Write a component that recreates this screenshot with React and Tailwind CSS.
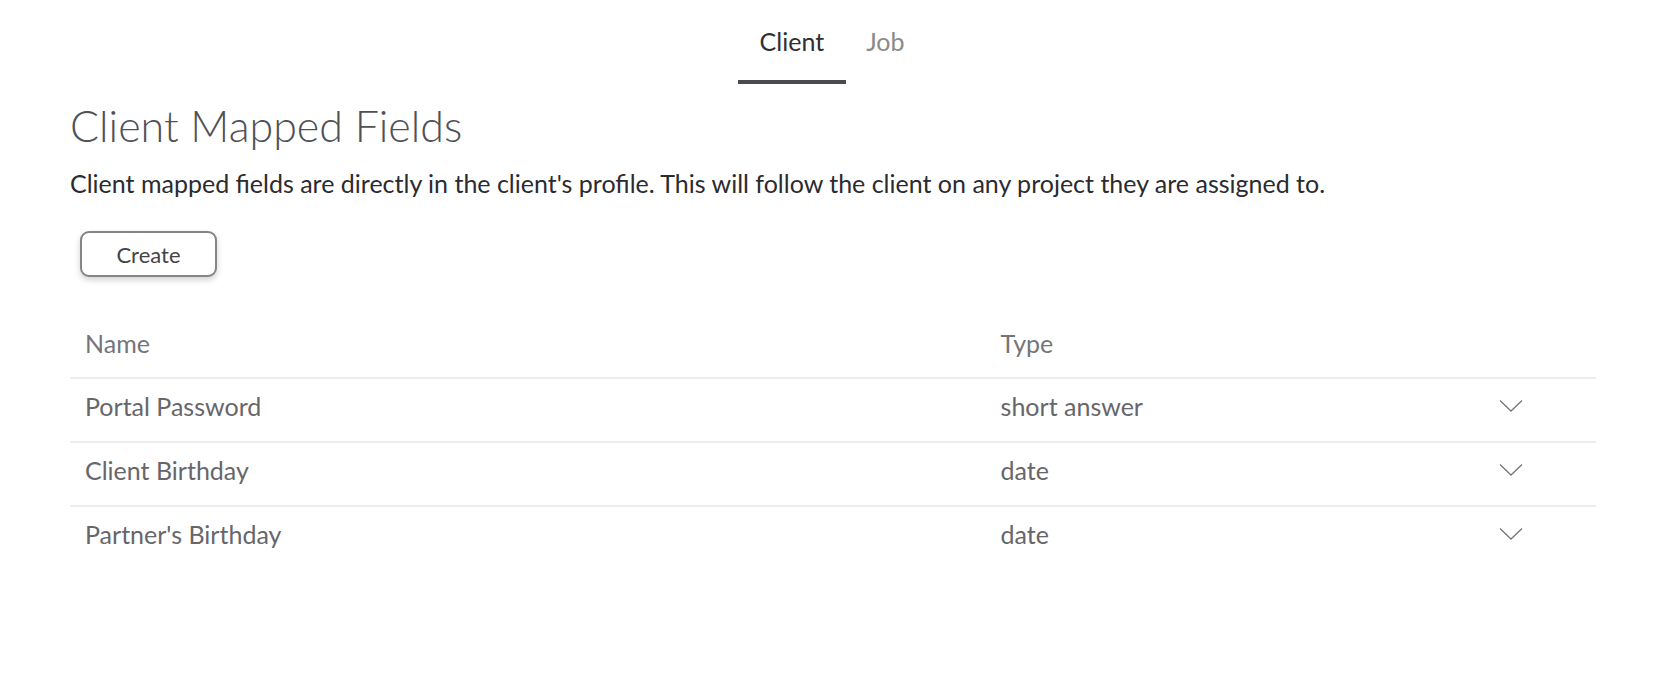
import React from 'react';

const fields = [
  { name: 'Portal Password', type: 'short answer' },
  { name: 'Client Birthday', type: 'date' },
  { name: "Partner's Birthday", type: 'date' },
];

function Chevron() {
  return (
    <svg width="24" height="14" viewBox="0 0 24 14" fill="none" className="text-[#777]">
      <path d="M1 1.5 L12 12 L23 1.5" stroke="currentColor" strokeWidth="1.3" />
    </svg>
  );
}

export default function App() {
  return (
    <div className="min-h-screen bg-white font-['Lato','Helvetica',sans-serif]">
      {/* Tabs */}
      <nav className="flex justify-center">
        <div className="flex">
          <div className="h-[84px] px-[22px] pt-[26px] border-b-4 border-[#4a4a4f] text-[25px] leading-[30px] text-[#2e2e33] cursor-pointer">
            Client
          </div>
          <div className="h-[84px] pl-[20px] pr-[28px] pt-[26px] border-b-4 border-transparent text-[25px] leading-[30px] text-[#8a8a8a] cursor-pointer">
            Job
          </div>
        </div>
      </nav>

      <div className="pl-[70px] pr-[74px]">
        <h1 className="mt-[16px] text-[43px] leading-[52px] font-light text-[#505055]">
          Client Mapped Fields
        </h1>
        <p className="mt-[16px] text-[25px] leading-[30px] text-[#2b2b30]">
          Client mapped fields are directly in the client's profile. This will follow the client on any project they are assigned to.
        </p>
        <button className="mt-[33px] ml-[10px] w-[137px] h-[46px] rounded-[9px] border-2 border-[#858585] bg-white text-[22px] text-[#444] shadow-[0_3px_6px_rgba(0,0,0,0.18)]">
          Create
        </button>

        {/* Table */}
        <div className="mt-[51px]">
          <div className="grid grid-cols-[60%_40%] pb-[19px] border-b-2 border-[#efeaec] text-[25px] leading-[30px] text-[#74747a]">
            <div className="pl-[15px]">Name</div>
            <div className="pl-[15px]">Type</div>
          </div>
          {fields.map((f, i) => (
            <div
              key={f.name}
              className={`grid grid-cols-[60%_40%] pt-[12px] pb-[20px] text-[25px] leading-[30px] text-[#66666b] ${i < fields.length - 1 ? 'border-b-2 border-[#efeaec]' : ''}`}
            >
              <div className="pl-[15px]">{f.name}</div>
              <div className="pl-[15px] pr-[73px] flex items-center justify-between">
                <span>{f.type}</span>
                <Chevron />
              </div>
            </div>
          ))}
        </div>
      </div>
    </div>
  );
}
